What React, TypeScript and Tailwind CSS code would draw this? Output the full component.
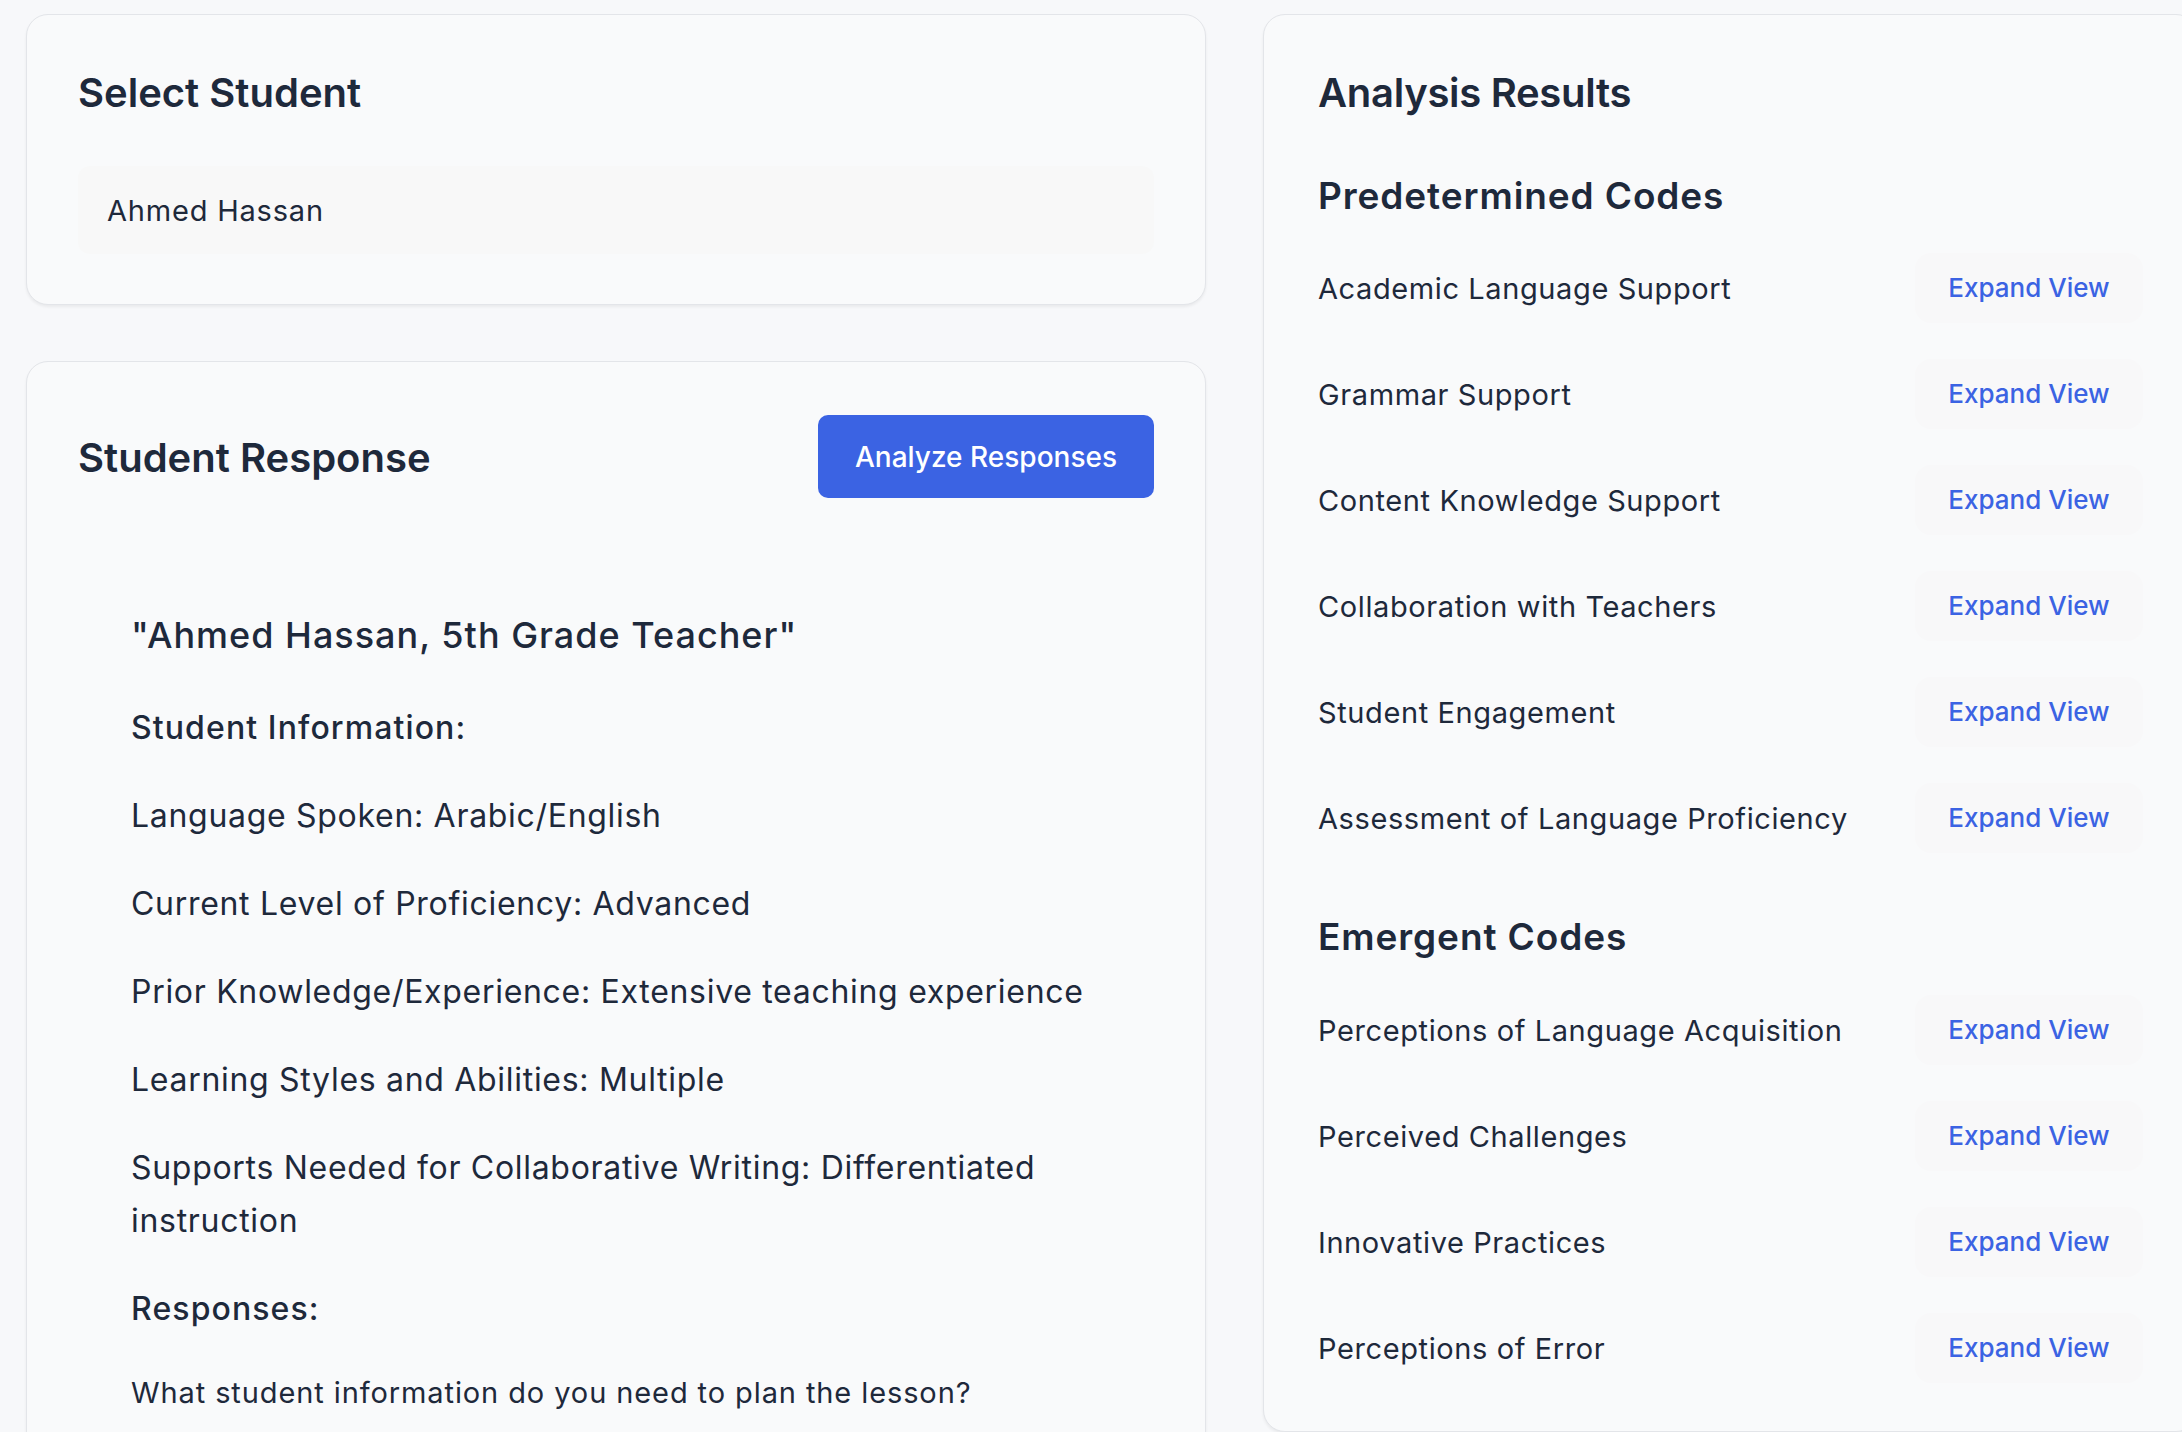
import React from "react";

const predetermined = [
  "Academic Language Support",
  "Grammar Support",
  "Content Knowledge Support",
  "Collaboration with Teachers",
  "Student Engagement",
  "Assessment of Language Proficiency",
];

const emergent = [
  "Perceptions of Language Acquisition",
  "Perceived Challenges",
  "Innovative Practices",
  "Perceptions of Error",
];

function CodeRow({ label }: { label: string }) {
  return (
    <div className="flex h-[70px] items-center justify-between">
      <span className="pt-[1px] text-[29px] leading-[35px] tracking-[0.6px] text-[#1e293b]">{label}</span>
      <button className="flex h-[70px] w-[228px] items-center justify-center rounded-[16px] bg-[#f8f8f9] text-[26px] font-medium leading-[32px] text-[#3b63e3]">
        Expand View
      </button>
    </div>
  );
}

export default function App() {
  return (
    <div className="h-[1432px] w-[2182px] overflow-hidden bg-[#f7f8fa] font-['Inter',sans-serif] text-[#1e293b]">
      <div className="flex w-[2300px] items-start gap-[57px] pl-[26px] pt-[14px]">
        {/* Left column */}
        <div className="flex w-[1180px] flex-col gap-[56px]">
          <div className="rounded-[22px] border border-[#e3e5e9] bg-[#f9fafb] px-[51px] pb-[50px] pt-[51px] shadow-[0_2px_3px_rgba(0,0,0,0.06)]">
            <h2 className="text-[40px] font-semibold leading-[54px]">Select Student</h2>
            <div className="mt-[46px] flex h-[88px] items-center rounded-[12px] bg-[#f8f8f8] pl-[29px] pt-[1px] text-[29px] leading-[35px] tracking-[0.8px]">
              Ahmed Hassan
            </div>
          </div>

          <div className="rounded-[22px] border border-[#e3e5e9] bg-[#f9fafb] px-[51px] pb-[60px] pt-[53px] shadow-[0_2px_3px_rgba(0,0,0,0.06)]">
            <div className="flex h-[83px] items-center justify-between">
              <h2 className="pt-[2px] text-[40px] font-semibold leading-[48px]">Student Response</h2>
              <button className="flex h-[83px] w-[336px] items-center justify-center rounded-[10px] bg-[#3b63e3] text-[28px] font-medium leading-[34px] text-white">
                Analyze Responses
              </button>
            </div>
            <div className="pl-[53px] pt-[110px]">
              <h3 className="mb-[39px] text-[36px] font-medium leading-[54px] tracking-[1px]">"Ahmed Hassan, 5th Grade Teacher"</h3>
              <p className="mb-[35px] text-[32px] font-medium leading-[53px] tracking-[1.1px]">Student Information:</p>
              <p className="mb-[35px] text-[32px] leading-[53px] tracking-[0.7px]">Language Spoken: Arabic/English</p>
              <p className="mb-[35px] text-[32px] leading-[53px] tracking-[0.7px]">Current Level of Proficiency: Advanced</p>
              <p className="mb-[35px] text-[32px] leading-[53px] tracking-[0.7px]">Prior Knowledge/Experience: Extensive teaching experience</p>
              <p className="mb-[35px] text-[32px] leading-[53px] tracking-[0.7px]">Learning Styles and Abilities: Multiple</p>
              <p className="mb-[35px] w-[1000px] text-[32px] leading-[53px] tracking-[0.7px]">
                Supports Needed for Collaborative Writing: Differentiated instruction
              </p>
              <p className="mb-[35px] text-[32px] font-medium leading-[53px] tracking-[1.1px]">Responses:</p>
              <p className="text-[29px] leading-[46px] tracking-[0.9px]">What student information do you need to plan the lesson?</p>
            </div>
          </div>
        </div>

        {/* Right column */}
        <div className="w-[935px] rounded-[22px] border border-[#e3e5e9] bg-[#f9fafb] px-[54px] pb-[48px] pt-[51px] shadow-[0_2px_3px_rgba(0,0,0,0.06)]">
          <h2 className="text-[40px] font-semibold leading-[54px] tracking-[-0.3px]">Analysis Results</h2>

          <h3 className="mt-[49px] text-[37px] font-semibold leading-[54px] tracking-[0.9px]">Predetermined Codes</h3>
          <div className="mt-[30px] flex flex-col gap-[36px]">
            {predetermined.map((c) => (
              <CodeRow key={c} label={c} />
            ))}
          </div>

          <h3 className="mt-[57px] text-[37px] font-semibold leading-[54px] tracking-[0.9px]">Emergent Codes</h3>
          <div className="mt-[31px] flex flex-col gap-[36px]">
            {emergent.map((c) => (
              <CodeRow key={c} label={c} />
            ))}
          </div>
        </div>
      </div>
    </div>
  );
}
